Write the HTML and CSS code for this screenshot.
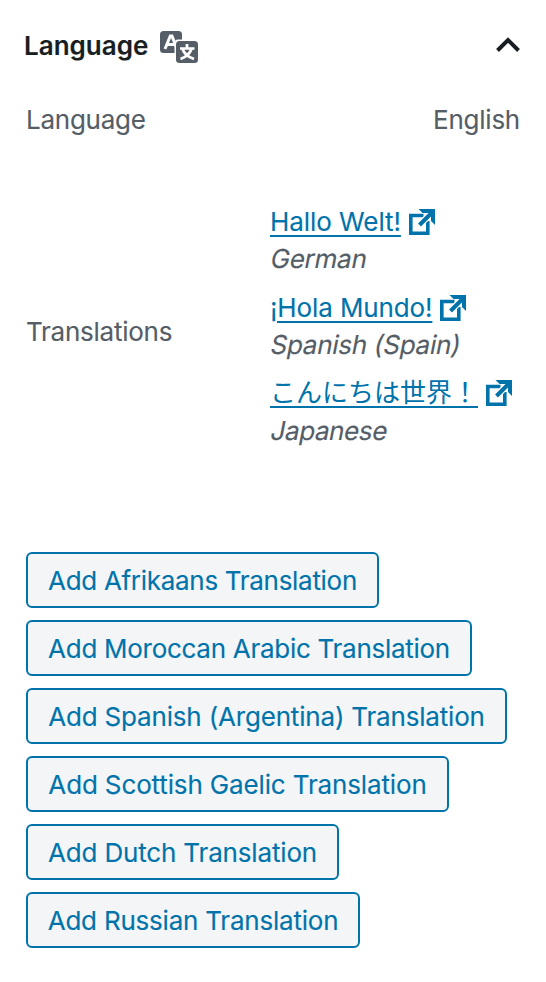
FILE: index.html
```html
<!DOCTYPE html>
<html lang="en">
<head>
<meta charset="utf-8">
<title>Language</title>
<link rel="stylesheet" href="styles.css">
</head>
<body>
<svg class="defs" aria-hidden="true"><symbol id="external" viewBox="0 0 26 26"><path d="M14.500 6.500H1.800V24.200H18.800V12" fill="none" stroke="currentColor" stroke-width="3.600"/><path d="M9.500 17L21 5.500" fill="none" stroke="#fff" stroke-width="6.500"/><path d="M10.500 16L22 4.500" fill="none" stroke="currentColor" stroke-width="4"/><path d="M9.500 0H26V16L22 12V6L20 4H13.500Z" fill="currentColor"/></symbol></svg>
<section class="panel">
  <header class="head">
    <h2>Language</h2>
    <svg class="lang-icon" viewBox="0 0 38 32"><rect width="22" height="22" rx="3.500" fill="#555d66"/><path d="M5 18L10.300 5H12L17 18M7 13.500H15" fill="none" stroke="#fff" stroke-width="3"/><path d="M14.500 33V12Q14.500 8.500 18 8.500H39V33Z" fill="#fff"/><rect x="16" y="10" width="22" height="22" rx="3.500" fill="#555d66"/><path d="M27 13V17M20 17.500H34.500M22.500 18Q25 25 34 28M31.500 18Q29 25 20.500 28" fill="none" stroke="#fff" stroke-width="2.700"/></svg>
    <svg class="chevron" viewBox="0 0 24 16"><path d="M1.500 13.500L12 3L22.500 13.500" fill="none" stroke="#191e23" stroke-width="4"/></svg>
  </header>
  <div class="row"><span>Language</span><span>English</span></div>
  <div class="translations">
    <span class="label">Translations</span>
    <ul class="list">
      <li><a href="#">Hallo Welt!</a><svg class="ext"><use href="#external"/></svg><em>German</em></li>
      <li class="hola"><a href="#">¡Hola Mundo!</a><svg class="ext"><use href="#external"/></svg><em>Spanish (Spain)</em></li>
      <li class="ja"><a href="#" lang="ja">こんにちは世界！</a><svg class="ext"><use href="#external"/></svg><em class="japanese">Japanese</em></li>
    </ul>
  </div>
  <div class="buttons">
    <button class="b1">Add Afrikaans Translation</button>
    <button class="b2">Add Moroccan Arabic Translation</button>
    <button class="b3">Add Spanish (Argentina) Translation</button>
    <button class="b4">Add Scottish Gaelic Translation</button>
    <button class="b5">Add Dutch Translation</button>
    <button class="b6">Add Russian Translation</button>
  </div>
</section>
</body>
</html>
```
FILE: styles.css
```css
* { box-sizing: border-box; }
body { margin: 0; background: #fff; color: #555d66; font: 26px/36px Inter, "Noto Sans CJK JP", sans-serif; letter-spacing: -0.25px; -webkit-text-stroke: 0.12px currentColor; }
.defs { display: none; }
.panel { padding: 28px 26px 0; height: 982px; }
.head { display: flex; height: 36px; align-items: center; color: #191e23; }
h2 { margin: 0 0 0 -2px; width: 124px; font-size: 26px; font-weight: 600; letter-spacing: 0; }
.lang-icon { width: 38px; height: 32px; margin-left: 12px; margin-top: 2px; }
.chevron { width: 24px; height: 16px; margin-left: auto; margin-top: -2px; }
.row { display: flex; justify-content: space-between; margin-top: 38px; }
.translations { display: flex; align-items: center; margin-top: 66px; height: 256px; }
.label { width: 244px; }
.list { list-style: none; margin: 0; padding: 2px 0 0; }
li { height: 86px; white-space: nowrap; letter-spacing: -0.06px; }
.hola { letter-spacing: -0.12px; }
.ja { letter-spacing: 0; }
a { display: inline-block; color: #0073aa; text-decoration: underline; text-decoration-thickness: 2px; text-underline-offset: 4px; }
.ja a { -webkit-text-stroke: 0; transform: translateY(-1px); text-underline-offset: 4px; }
em { display: block; width: max-content; margin: 1px 0 0 1px; font-style: normal; letter-spacing: -0.25px; transform: skewX(-11deg); }
.japanese { letter-spacing: -0.4px; }
.ext { width: 26px; height: 26px; margin-left: 8.5px; color: #0073aa; vertical-align: -4px; }
.hola .ext, .ja .ext { margin-left: 7.8px; }
.ja .ext { vertical-align: -3px; }
.buttons { display: flex; flex-direction: column; align-items: flex-start; gap: 12px; margin-top: 92px; }
button { height: 56px; padding: 2px 0 0; border: 2px solid #0073aa; border-radius: 6px; background: #f3f5f6; color: #0073aa; font: inherit; white-space: nowrap; }
.b1 { width: 353px; letter-spacing: -0.3px; }
.b2 { width: 446px; letter-spacing: -0.28px; }
.b3 { width: 481px; letter-spacing: -0.18px; }
.b4 { width: 423px; letter-spacing: -0.14px; }
.b5 { width: 313px; letter-spacing: -0.16px; }
.b6 { width: 334px; letter-spacing: -0.22px; }
```
